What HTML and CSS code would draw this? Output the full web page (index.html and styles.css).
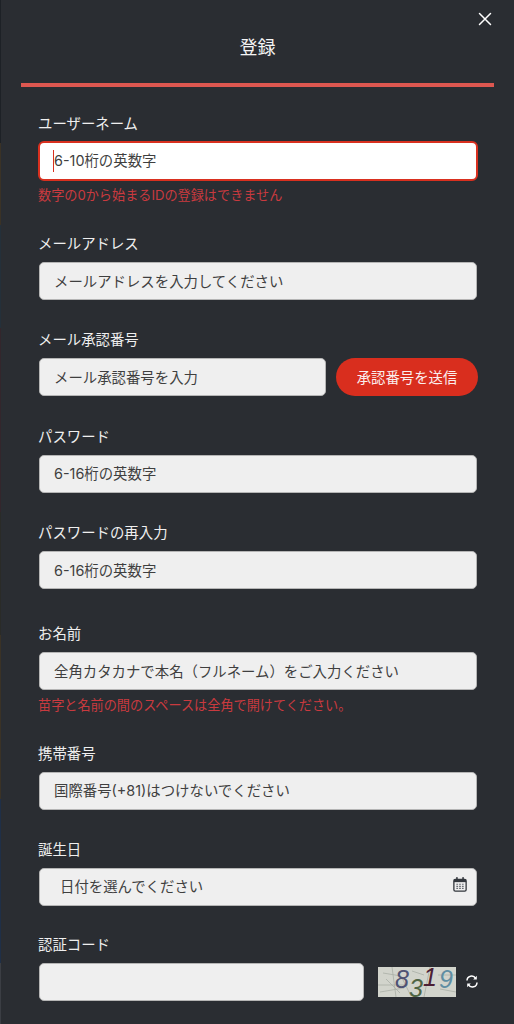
FILE: index.html
```html
<!DOCTYPE html>
<html lang="ja">
<head>
<meta charset="utf-8">
<title>登録</title>
<link rel="stylesheet" href="styles.css">
</head>
<body>
<main class="modal">
  <button class="close" aria-label="閉じる">
    <svg width="14" height="14" viewBox="0 0 14 14"><path d="M1.5 1.5l11 11M12.5 1.5l-11 11" fill="none" stroke="#fff" stroke-width="1.5" stroke-linecap="round"/></svg>
  </button>
  <header class="head"><h1>登録</h1></header>
  <form class="form">
    <div class="field has-error">
      <label>ユーザーネーム</label>
      <div class="input focused"><span class="caret"></span>6-10桁の英数字</div>
      <p class="error">数字の0から始まるIDの登録はできません</p>
    </div>
    <div class="field">
      <label>メールアドレス</label>
      <div class="input">メールアドレスを入力してください</div>
    </div>
    <div class="field">
      <label>メール承認番号</label>
      <div class="row">
        <div class="input grow">メール承認番号を入力</div>
        <button type="button" class="send">承認番号を送信</button>
      </div>
    </div>
    <div class="field">
      <label>パスワード</label>
      <div class="input">6-16桁の英数字</div>
    </div>
    <div class="field field-tall">
      <label>パスワードの再入力</label>
      <div class="input">6-16桁の英数字</div>
    </div>
    <div class="field has-error field-name">
      <label>お名前</label>
      <div class="input">全角カタカナで本名（フルネーム）をご入力ください</div>
      <p class="error">苗字と名前の間のスペースは全角で開けてください。</p>
    </div>
    <div class="field">
      <label>携帯番号</label>
      <div class="input">国際番号(+81)はつけないでください</div>
    </div>
    <div class="field field-short">
      <label>誕生日</label>
      <div class="input date">日付を選んでください
        <svg class="cal" width="14" height="15" viewBox="0 0 16 17"><path d="M4.5 .8v2.5M11.5 .8v2.5" stroke="#33373d" stroke-width="1.8" stroke-linecap="round"/><rect x="1" y="2.8" width="14" height="13.2" rx="1.6" fill="none" stroke="#33373d" stroke-width="1.5"/><rect x="1" y="2.8" width="14" height="3" fill="#33373d"/><path d="M3.8 8.2h2M7 8.2h2M10.2 8.2h2M3.8 10.6h2M7 10.6h2M10.2 10.6h2M3.8 13h2M7 13h2M10.2 13h2" stroke="#6a6e74" stroke-width="1.4"/></svg>
      </div>
    </div>
    <div class="field">
      <label>認証コード</label>
      <div class="row captcha-row">
        <div class="input grow"></div>
        <svg class="captcha" width="78" height="30" viewBox="0 0 78 30">
          <rect width="78" height="30" fill="#d2d4cc"/>
          <path d="M5 6l18 3 10 20M0 18h30M14 0l4 30M52 0l-6 30M60 8h18M2 25l24-4M62 22l16 3M8 12l14 14M34 4l12 4" stroke="#a9aea6" stroke-width=".8" fill="none"/>
          <text class="cap-d" x="24" y="21" fill="#4f5374">8</text>
          <text class="cap-d" x="38" y="29.5" fill="#4f6544">3</text>
          <text class="cap-d" x="52" y="18.5" fill="#4c2034">1</text>
          <text class="cap-d" x="68" y="21" fill="#5f8ea3">9</text>
        </svg>
        <svg class="refresh" width="12" height="13" viewBox="0 0 12 13"><path d="M1 5.6A4.6 4.6 0 0 1 9.6 3.4M11 7.4A4.6 4.6 0 0 1 2.4 9.6" fill="none" stroke="#fff" stroke-width="1.5"/><path d="M10.8 .8v3.6H7.2zM1.2 12.2V8.6h3.6z" fill="#fff"/></svg>
      </div>
    </div>
  </form>
</main>
</body>
</html>
```
FILE: styles.css
```css
* { box-sizing: border-box; }
html, body { margin: 0; height: 100%; }
body {
  background: #2a2d32;
  font-family: "Inter", "Noto Sans CJK JP", sans-serif;
  color: #f2f2f2;
  overflow: hidden;
}
.modal { position: relative; height: 1024px; padding: 0 20px 0 21px; overflow: hidden; }
.modal::before {
  content: ""; position: absolute; left: 0; top: 0; bottom: 0; width: 1px;
  background: linear-gradient(#1d2126 0 14%, #3a3226 14% 22%, #24303a 22% 32%, #33262c 32% 50%, #2a2b28 50% 62%, #3a3226 62% 78%, #1f2f47 78% 94%, #3b3e44 94%);
}
.close {
  position: absolute; top: 12px; right: 22px;
  width: 14px; height: 14px; padding: 0; border: 0; background: none; display: flex;
}
.head { height: 87px; border-bottom: 4px solid #dd5750; padding-top: 35px; }
.head h1 { margin: 0; text-align: center; font-size: 18px; line-height: 26px; font-weight: 400; color: #f5f5f5; }
.form { padding: 27px 16px 0 17px; }
.field { margin-bottom: 30.4px; }
.field.has-error { margin-bottom: 29px; }
.field.field-name { margin-bottom: 28.6px; }
.field.field-tall { margin-bottom: 35px; }
.field.field-short { margin-bottom: 28.8px; }
label { display: block; font-size: 14.4px; line-height: 20px; margin-bottom: 8px; color: #efefef; }
.input {
  height: 38px; padding: 0 14px 2px; display: flex; align-items: center;
  background: #efefef; border: 1px solid #b5b5b5; border-radius: 5px;
  font-size: 14.4px; color: #3f3f3f; margin-left: 1px; margin-right: 1px; position: relative;
}
.input.focused {
  background: #fff; border: 2px solid #d9301f; margin: 0; height: 40px; margin-top: -1px;
  padding-left: 14px; padding-bottom: 3px; border-radius: 6px;
  margin-bottom: -1px;
}
.caret { position: absolute; left: 13px; top: 7px; width: 1px; height: 22px; background: #d9301f; }
.error { margin: 5px 0 0; font-size: 13.15px; line-height: 20px; color: #c93a3f; }
.row { display: flex; align-items: center; gap: 10px; }
.grow { flex: 1; min-width: 0; margin-right: 0; }
.send {
  width: 142px; height: 38px; border: 0; border-radius: 19px; background: #d92e1e;
  color: #fbeeee; font: inherit; font-size: 14.4px; padding: 0 0 2px; flex: none;
}
.date { padding-left: 20px; padding-bottom: 3px; }
.cal { position: absolute; right: 9px; top: 8px; }
.captcha-row { gap: 14px; }
.captcha { flex: none; overflow: visible; }
.cap-d { font-family: "Liberation Sans", sans-serif; font-style: italic; font-size: 25px; text-anchor: middle; }
.refresh { flex: none; margin-left: -4px; }
```
